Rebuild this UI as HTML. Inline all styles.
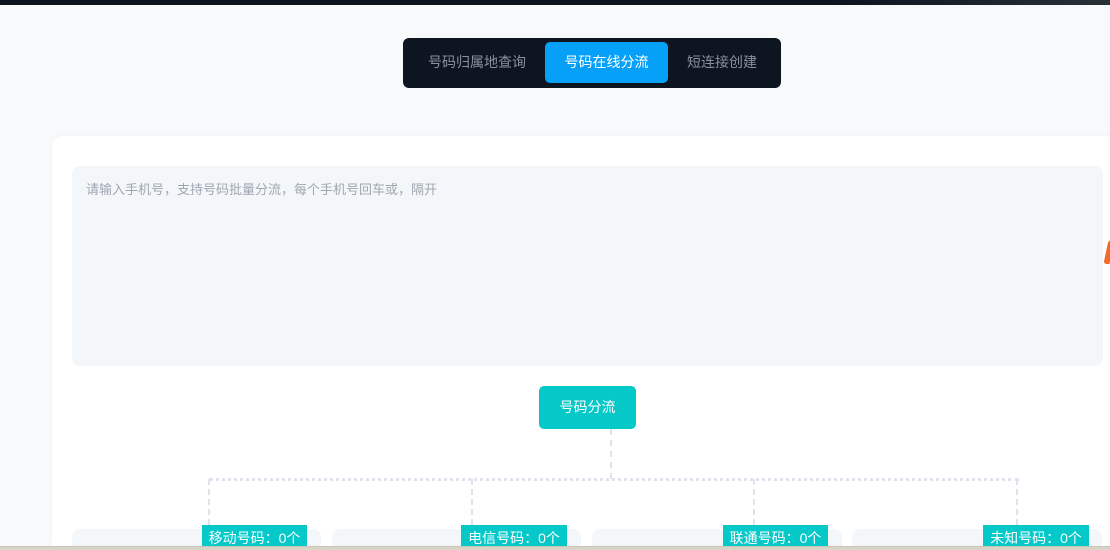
<!DOCTYPE html>
<html style="overflow:hidden;height:550px"><head><meta charset="utf-8"><style>
body{margin:0;width:1110px;height:550px;overflow:hidden;background:#f8f9fb;position:relative;font-family:"Liberation Sans","Noto Sans CJK SC",sans-serif}
div{position:absolute;box-sizing:border-box}
.t{font-size:14px;color:#8a909c;top:0;height:50px;line-height:48px;text-align:center}
.lbl{background:#05c8c8;color:#fff;font-size:14px;height:25px;line-height:27px;text-align:center;top:525px}
.bc{background:#f4f7fa;border-radius:8px 8px 0 0;top:529px;height:17px}
.v{border-left:2px dashed #e2e2ee;width:0}
</style></head><body>
<div style="left:0;top:0;width:1110px;height:5px;background:linear-gradient(90deg,#0c1420 75%,#2a3038)"></div>
<div style="left:403px;top:38px;width:378px;height:50px;background:#0d1520;border-radius:6px">
<div class="t" style="left:12px;width:124px">号码归属地查询</div>
<div style="left:142px;top:4px;width:123px;height:41px;background:#07a0f8;border-radius:5px;color:#fff;font-size:14px;line-height:40px;text-align:center">号码在线分流</div>
<div class="t" style="left:270px;width:98px">短连接创建</div>
</div>
<div style="left:52px;top:136px;width:1080px;height:410px;background:#fff;border-radius:10px 10px 0 0;box-shadow:0 0 8px rgba(0,0,0,.03)"></div>
<div style="left:72px;top:166px;width:1031px;height:200px;background:#f4f7fa;border-radius:8px;padding:13px 14px;font-size:13px;color:#a0a6b0">请输入手机号，支持号码批量分流，每个手机号回车或，隔开</div>
<div style="left:1106px;top:240px;width:6px;height:24px;background:#f06a2a;border-radius:3px 0 0 3px;transform:skewX(-12deg)"></div>
<div style="left:539px;top:386px;width:97px;height:43px;background:#05c8c8;border-radius:5px;color:#fff;font-size:14px;line-height:43px;text-align:center">号码分流</div>
<div class="v" style="left:610px;top:429px;height:50px"></div>
<div style="left:209px;top:478px;width:810px;height:0;border-top:3px dotted #e2e2ee"></div>
<div class="v" style="left:208px;top:479px;height:46px"></div>
<div class="v" style="left:471px;top:479px;height:46px"></div>
<div class="v" style="left:753px;top:479px;height:46px"></div>
<div class="v" style="left:1016px;top:479px;height:46px"></div>
<div class="bc" style="left:72px;width:249px"></div>
<div class="bc" style="left:332px;width:249px"></div>
<div class="bc" style="left:592px;width:250px"></div>
<div class="bc" style="left:852px;width:250px"></div>
<div class="lbl" style="left:202px;width:105px;height:21px">移动号码：0个</div>
<div class="lbl" style="left:461px;width:106px;height:21px">电信号码：0个</div>
<div class="lbl" style="left:723px;width:105px;height:21px">联通号码：0个</div>
<div class="lbl" style="left:983px;width:106px;height:21px">未知号码：0个</div>
<div style="left:0;top:546px;width:1110px;height:4px;background:#d8d4c8;border-top:1px solid #c8c4b8"></div>
</body></html>
